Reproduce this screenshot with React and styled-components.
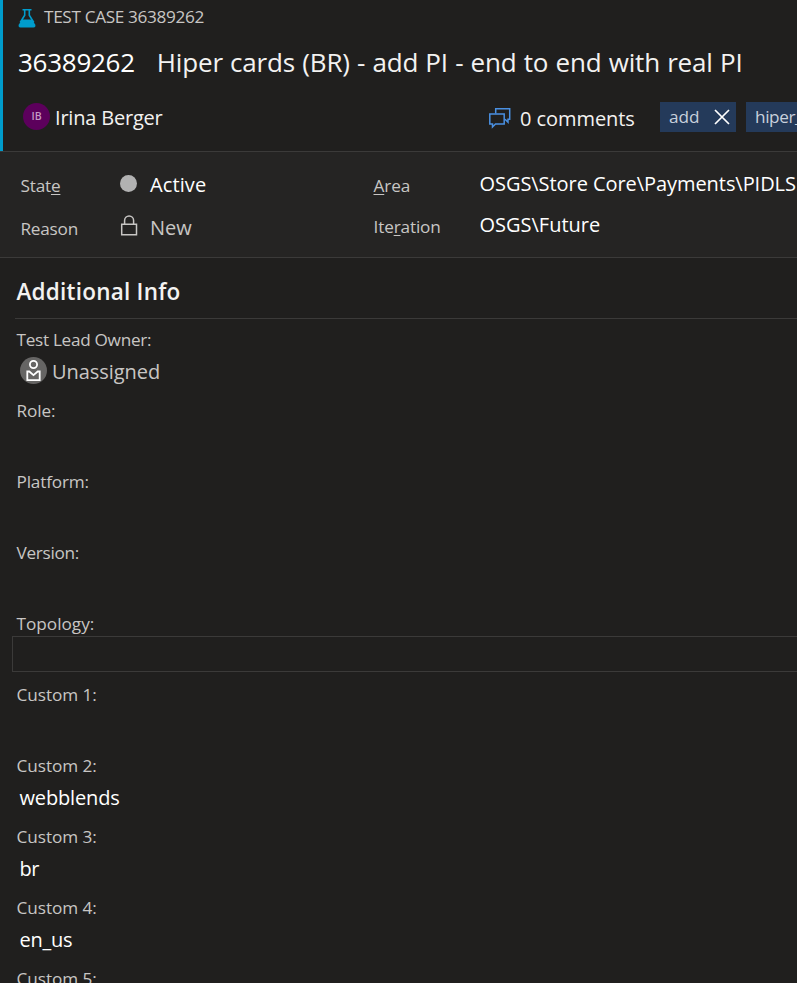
import React from "react";
import styled, { createGlobalStyle } from "styled-components";

const GlobalStyle = createGlobalStyle`
  body {
    margin: 0;
    overflow: hidden;
    background: #201f1e;
    font-family: "Open Sans", "Noto Sans", sans-serif;
    color: #f3f2f1;
  }
  * { box-sizing: border-box; }
  svg { display: block; flex: none; }
`;

const Page = styled.main`
  height: 983px;
  overflow: hidden;
  white-space: nowrap;
`;

const Header = styled.header`
  height: 151px;
  border-left: 3px solid #009ccc;
  padding: 5px 0 0 15px;
`;

const TypeLine = styled.div`
  display: flex;
  align-items: flex-start;
  gap: 8px;
  height: 37px;
  font-size: 17.2px;
  line-height: 24px;
  letter-spacing: -0.34px;
  color: #c8c6c4;

  svg { margin-top: 3px; }
`;

const TitleLine = styled.h1`
  display: flex;
  gap: 22px;
  margin: 0;
  height: 60px;
  font-size: 26px;
  font-weight: 400;
  line-height: 40px;
  letter-spacing: -0.16px;
  word-spacing: 0.6px;
`;

const ItemId = styled.span`
  letter-spacing: -0.27px;
  color: #ffffff;
`;

const MetaLine = styled.div`
  display: flex;
  height: 30px;
  font-size: 20px;
  line-height: 32px;
`;

const Assignee = styled.div`
  display: flex;
  flex: none;
  gap: 5px;
  width: 466px;
  padding-left: 5px;
  letter-spacing: -0.2px;
`;

const Avatar = styled.span`
  width: 27px;
  height: 27px;
  margin-top: 1px;
  border-radius: 50%;
  background: #5c005c;
  color: #c49ac4;
  font-size: 10.5px;
  font-weight: 600;
  line-height: 27px;
  letter-spacing: 0;
  text-align: center;
`;

const Comments = styled.div`
  display: flex;
  flex: none;
  gap: 9px;
  width: 176px;
  padding: 1px 0 0 5px;
  letter-spacing: -0.06px;

  svg { margin-top: 4px; }
`;

const Tag = styled.span`
  display: flex;
  flex: none;
  align-items: center;
  justify-content: space-between;
  width: ${(p) => p.$width}px;
  height: 30px;
  margin-right: 10px;
  padding: 0 6px 0 9px;
  background: #243a5a;
  color: #c8d0dc;
  font-size: 17.2px;
  letter-spacing: ${(p) => p.$track || 0}px;
`;

const Band = styled.section`
  display: grid;
  grid-template-columns: 353px 1fr;
  height: 107px;
  padding-left: 20.5px;
  border-top: 1px solid #3b3a39;
  border-bottom: 1px solid #3b3a39;
  background: #252423;
`;

const Pairs = styled.div`
  padding-top: ${(p) => p.$top}px;
`;

const Pair = styled.div`
  display: flex;
  height: ${(p) => p.$height}px;
  line-height: ${(p) => p.$height}px;
`;

const PairLabel = styled.span`
  width: ${(p) => p.$width}px;
  font-size: 17.2px;
  letter-spacing: ${(p) => p.$track}px;
  color: #c8c6c4;

  u {
    text-decoration-thickness: 1px;
    text-underline-offset: 2px;
    text-decoration-skip-ink: none;
  }
`;

const Mark = styled.span`
  display: flex;
  width: 30.5px;
  padding-top: ${(p) => p.$top}px;
`;

const StateDot = styled.i`
  width: 17px;
  height: 17px;
  border-radius: 50%;
  background: #b2b2b2;
`;

const PairValue = styled.span`
  font-size: 20px;
  letter-spacing: ${(p) => p.$track || 0}px;
  margin-top: ${(p) => p.$shift || 0}px;
  color: ${(p) => (p.$muted ? "#c8c6c4" : "#ffffff")};
`;

const Details = styled.section`
  padding-left: 12px;
`;

const Heading = styled.h2`
  height: 61px;
  margin: 0 0 9px 3px;
  padding-left: 1.5px;
  border-bottom: 1px solid #3b3a39;
  font-size: 22.5px;
  font-weight: 600;
  line-height: 68px;
  letter-spacing: 0.23px;
`;

const Field = styled.div`
  height: 71px;
`;

const FieldLabel = styled.div`
  height: 24px;
  padding-left: 4.5px;
  font-size: 17.2px;
  line-height: 24px;
  letter-spacing: ${(p) => p.$track || 0}px;
  color: #c8c6c4;
`;

const FieldBox = styled.div`
  display: flex;
  align-items: flex-start;
  gap: 5px;
  height: 36px;
  padding-left: ${(p) => (p.$person ? 7 : 6.5)}px;
  border: 1px solid ${(p) => (p.$outlined ? "#3b3a39" : "transparent")};
  border-right: 0;
  font-size: 20px;
  line-height: 38px;
  letter-spacing: ${(p) => p.$track || 0}px;
  color: ${(p) => (p.$person ? "#c8c6c4" : "#ffffff")};

  svg { margin-top: 4px; }
`;

const FlaskIcon = () => (
  <svg width="18" height="20" viewBox="0 0 18 20" fill="none">
    <path d="M4.500 1.800h9M6.700 2v5.200L2.200 14.500M11.300 2v5.200l4.500 7.300" stroke="#009ccc" strokeWidth="1.6" />
    <path d="M4.200 11.500h9.600l3.200 4.700c1 1.700.3 3.300-1.500 3.300h-13C.7 19.500 0 17.900 1 16.200z" fill="#009ccc" />
  </svg>
);

const CommentsIcon = () => (
  <svg width="22" height="22" viewBox="0 0 22 22" fill="none" stroke="#4a90e2" strokeWidth="1.5">
    <path d="M6.700 6.500V1.700h14v10.600h-1.700v3l-3-3" />
    <path d="M.8 7h14.400v10H6.500l-3 3v-3H.8z" />
  </svg>
);

const CloseIcon = () => (
  <svg width="16" height="16" viewBox="0 0 16 16" stroke="#ffffff" strokeWidth="1.7">
    <path d="M1 1l14 14M15 1L1 15" />
  </svg>
);

const LockIcon = () => (
  <svg width="18" height="21" viewBox="0 0 18 21" fill="none" stroke="#c8c6c4" strokeWidth="1.5">
    <path d="M1.700 9.200h14.800v10.500H1.700zM4.600 9V5.500a4.500 4.500 0 0 1 9 0V9" />
  </svg>
);

const PersonIcon = () => (
  <svg width="27" height="27" viewBox="0 0 27 27" fill="none" stroke="#ffffff" strokeWidth="1.8">
    <circle cx="13.500" cy="13.500" r="13.500" fill="#666564" stroke="none" />
    <circle cx="13.500" cy="7.500" r="3.600" />
    <path d="M7.300 14.500h2l4.200 3.600 4.200-3.600h2v8.600H7.300z" />
  </svg>
);

const FIELDS = [
  { label: "Test Lead Owner:", track: -0.3, value: "Unassigned", valueTrack: -0.05, person: true },
  { label: "Role:", track: -0.1 },
  { label: "Platform:", track: -0.18 },
  { label: "Version:", track: -0.3 },
  { label: "Topology:", outlined: true },
  { label: "Custom 1:", track: -0.06 },
  { label: "Custom 2:", track: -0.06, value: "webblends", valueTrack: -0.16 },
  { label: "Custom 3:", track: -0.06, value: "br", valueTrack: -0.4 },
  { label: "Custom 4:", track: -0.06, value: "en_us", valueTrack: -0.25 },
  { label: "Custom 5:", track: -0.06 },
];

export default function App() {
  return (
    <Page>
      <GlobalStyle />
      <Header>
        <TypeLine>
          <FlaskIcon />
          TEST CASE 36389262
        </TypeLine>
        <TitleLine>
          <ItemId>36389262</ItemId>
          <span>Hiper cards (BR) - add PI - end to end with real PI</span>
        </TitleLine>
        <MetaLine>
          <Assignee>
            <Avatar>IB</Avatar>
            Irina Berger
          </Assignee>
          <Comments>
            <CommentsIcon />
            0 comments
          </Comments>
          <Tag $width={76}>
            add
            <CloseIcon />
          </Tag>
          <Tag $width={110} $track={-0.4}>hiper_</Tag>
        </MetaLine>
      </Header>
      <Band>
        <Pairs $top={12}>
          <Pair $height={43}>
            <PairLabel $width={99} $track={-0.2}>Stat<u>e</u></PairLabel>
            <Mark $top={11}><StateDot /></Mark>
            <PairValue $track={0.1} $shift={-1}>Active</PairValue>
          </Pair>
          <Pair $height={43}>
            <PairLabel $width={99} $track={-0.24}>Reason</PairLabel>
            <Mark $top={8}><LockIcon /></Mark>
            <PairValue $muted $shift={-1}>New</PairValue>
          </Pair>
        </Pairs>
        <Pairs $top={13}>
          <Pair $height={41}>
            <PairLabel $width={106} $track={-0.13}><u>A</u>rea</PairLabel>
            <PairValue $track={-0.06} $shift={-2}>OSGS\Store Core\Payments\PIDLS</PairValue>
          </Pair>
          <Pair $height={41}>
            <PairLabel $width={106} $track={-0.15}>Ite<u>r</u>ation</PairLabel>
            <PairValue $shift={-2}>OSGS\Future</PairValue>
          </Pair>
        </Pairs>
      </Band>
      <Details>
        <Heading>Additional Info</Heading>
        {FIELDS.map((f) => (
          <Field key={f.label}>
            <FieldLabel $track={f.track}>{f.label}</FieldLabel>
            <FieldBox $outlined={f.outlined} $person={f.person} $track={f.valueTrack}>
              {f.person && <PersonIcon />}
              {f.value}
            </FieldBox>
          </Field>
        ))}
      </Details>
    </Page>
  );
}
